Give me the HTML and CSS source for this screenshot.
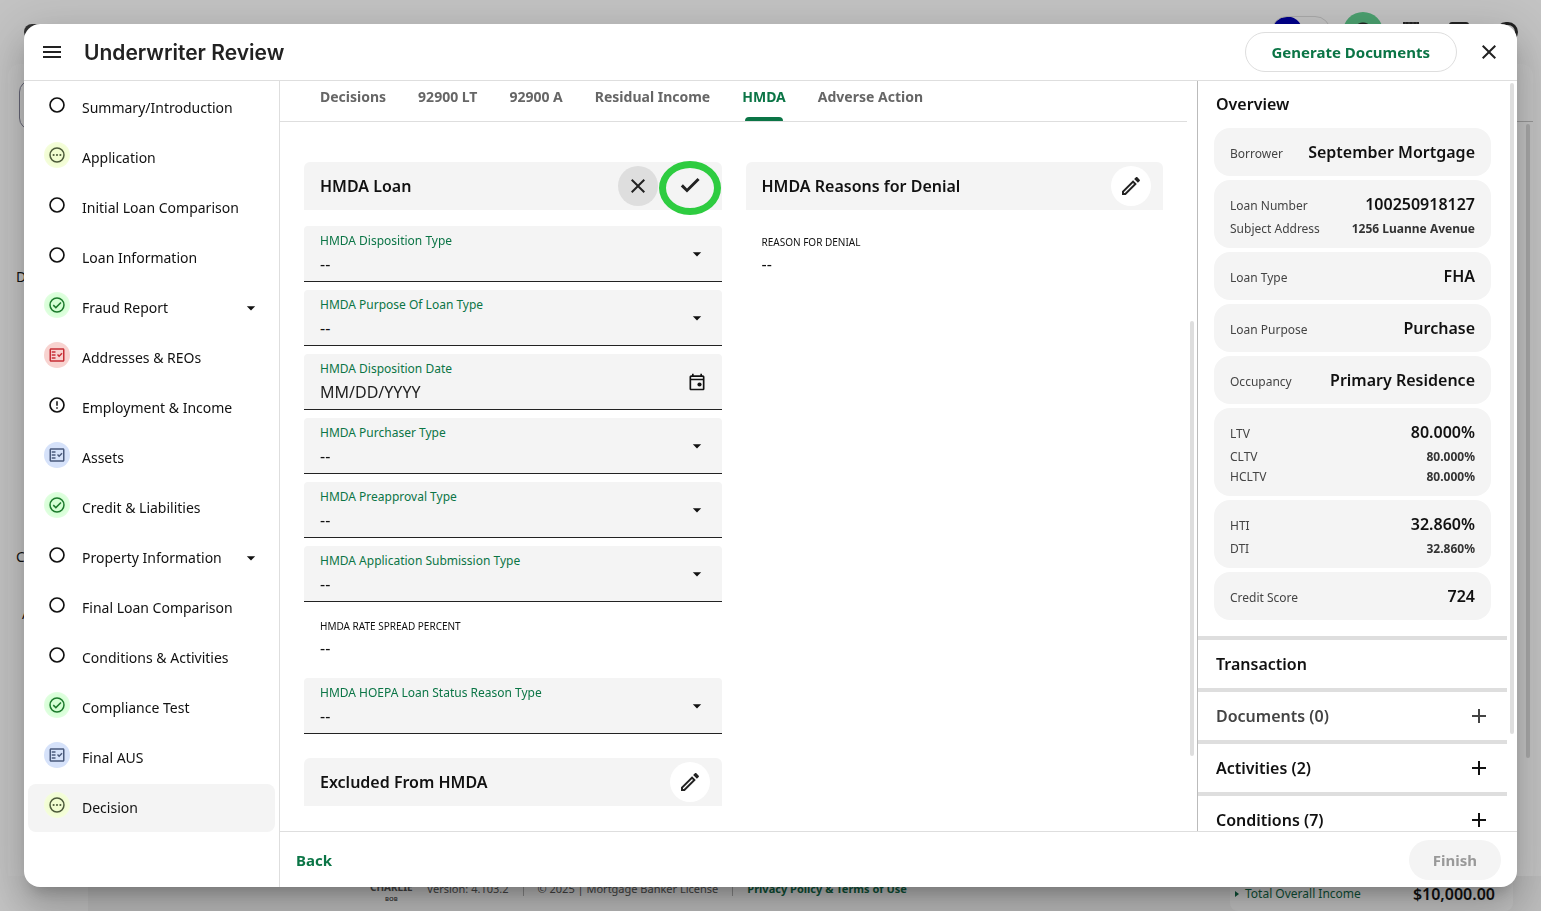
FILE: index.html
```html
<!DOCTYPE html>
<html lang="en">
<head>
    <meta charset="UTF-8">
    <title>Underwriter Review</title>
    <link rel="stylesheet" href="styles.css">
</head>
<body>
<svg class="sprite" aria-hidden="true">
    <symbol id="i-menu" viewBox="0 0 24 24"><path d="M3 18h18v-2H3v2zm0-5h18v-2H3v2zm0-7v2h18V6H3z"/></symbol>
    <symbol id="i-close" viewBox="0 0 24 24"><path d="M19 6.41L17.59 5 12 10.59 6.41 5 5 6.41 10.59 12 5 17.59 6.41 19 12 13.41 17.59 19 19 17.59 13.41 12z"/></symbol>
    <symbol id="i-check" viewBox="0 0 24 24"><path d="M9 14.4L4.9 10.3 2.8 12.4 9 18.6 21.6 6 19.5 3.9z"/></symbol>
    <symbol id="i-edit" viewBox="0 0 24 24"><path d="M14.06 9.02l.92.92L5.92 19H5v-.92l9.06-9.06M17.66 3c-.25 0-.51.1-.7.29l-1.83 1.83 3.75 3.75 1.83-1.83c.39-.39.39-1.02 0-1.41l-2.34-2.34c-.2-.2-.45-.29-.71-.29zm-3.6 3.19L3 17.25V21h3.75L17.81 9.94l-3.75-3.75z"/></symbol>
    <symbol id="i-arrow" viewBox="0 0 24 24"><path d="M7 10l5 5 5-5z"/></symbol>
    <symbol id="i-plus" viewBox="0 0 24 24"><path d="M19 13h-6v6h-2v-6H5v-2h6V5h2v6h6z"/></symbol>
    <symbol id="i-event" viewBox="0 0 24 24"><path d="M19 4h-1V2h-2v2H8V2H6v2H5c-1.100 0-2 .9-2 2v14c0 1.100.9 2 2 2h14c1.100 0 2-.9 2-2V6c0-1.100-.9-2-2-2zm0 16H5V10h14v10zm0-12H5V6h14v2z"/><circle cx="15" cy="15" r="2.500"/></symbol>
    <symbol id="i-empty" viewBox="0 0 24 24"><circle cx="12" cy="12" r="9.300" fill="none" stroke="currentColor" stroke-width="2.200"/></symbol>
    <symbol id="i-pending" viewBox="0 0 24 24"><circle cx="12" cy="12" r="9.300" fill="none" stroke="currentColor" stroke-width="2"/><circle cx="7.500" cy="12" r="1.400"/><circle cx="12" cy="12" r="1.400"/><circle cx="16.500" cy="12" r="1.400"/></symbol>
    <symbol id="i-done" viewBox="0 0 24 24"><g fill="none" stroke="currentColor" stroke-width="2"><circle cx="12" cy="12" r="9.300"/><path d="M7 12.200l3.500 3.300 6.800-6.800"/></g></symbol>
    <symbol id="i-error" viewBox="0 0 24 24"><circle cx="12" cy="12" r="9.300" fill="none" stroke="currentColor" stroke-width="2.200"/><path d="M11 7h2v6h-2zM11 15h2v2h-2z"/></symbol>
    <symbol id="i-fact" viewBox="0 0 24 24"><path d="M20 3H4c-1.100 0-2 .9-2 2v14c0 1.100.9 2 2 2h16c1.100 0 2-.9 2-2V5c0-1.100-.9-2-2-2zm0 16H4V5h16v14zM19.410 10.420L17.990 9l-3.170 3.170-1.410-1.420L12 12.160 14.820 15zM5 7h5v2H5zM5 11h5v2H5zM5 15h5v2H5z"/></symbol>
</svg>

<!-- page under the dialog -->
<div class="app">
    <div class="app-header">
        <span class="app-logo"></span>
        <span class="app-toggle"></span>
        <span class="app-tool"><i class="tool-avatar"></i></span>
        <span class="app-tool"><i class="tool-list"></i></span>
        <span class="app-tool"><i class="tool-card"></i></span>
        <span class="app-tool"><i class="tool-ring"></i></span>
    </div>
    <div class="app-main">
        <div class="app-rail">
            <span class="rail-box"></span>
            <span class="rail-d">D</span>
            <span class="rail-c">C</span>
            <span class="rail-a">A</span>
        </div>
        <div class="app-side"><i class="scroll-app"></i></div>
    </div>
    <div class="app-footer">
        <div class="app-legal">
            <span class="brand">CHARLIE<small>BOB</small></span>
            <span>Version: 4.103.2</span>
            <span>© 2025 | Mortgage Banker License</span>
            <a href="#">Privacy Policy &amp; Terms of Use</a>
        </div>
        <div class="app-total"><a href="#"><i class="caret"></i>Total Overall Income</a><strong>$10,000.00</strong></div>
    </div>
</div>

<div class="dialog" role="dialog" aria-labelledby="dialogTitle">
    <header class="dialog-header">
        <button type="button" class="plain" aria-label="Menu"><svg class="icon"><use href="#i-menu"/></svg></button>
        <h1 id="dialogTitle">Underwriter Review</h1>
        <button type="button" class="btn-outline">Generate Documents</button>
        <button type="button" class="plain" aria-label="Close"><svg class="icon"><use href="#i-close"/></svg></button>
    </header>

    <div class="dialog-body">
        <nav class="steps">
            <a href="#"><span class="status"><svg><use href="#i-empty"/></svg></span>Summary/Introduction</a>
            <a href="#"><span class="status pending"><svg><use href="#i-pending"/></svg></span>Application</a>
            <a href="#"><span class="status"><svg><use href="#i-empty"/></svg></span>Initial Loan Comparison</a>
            <a href="#"><span class="status"><svg><use href="#i-empty"/></svg></span>Loan Information</a>
            <a href="#"><span class="status done"><svg><use href="#i-done"/></svg></span>Fraud Report<svg class="expand"><use href="#i-arrow"/></svg></a>
            <a href="#"><span class="status failed"><svg><use href="#i-fact"/></svg></span>Addresses &amp; REOs</a>
            <a href="#"><span class="status"><svg><use href="#i-error"/></svg></span>Employment &amp; Income</a>
            <a href="#"><span class="status review"><svg><use href="#i-fact"/></svg></span>Assets</a>
            <a href="#"><span class="status done"><svg><use href="#i-done"/></svg></span>Credit &amp; Liabilities</a>
            <a href="#"><span class="status"><svg><use href="#i-empty"/></svg></span>Property Information<svg class="expand"><use href="#i-arrow"/></svg></a>
            <a href="#"><span class="status"><svg><use href="#i-empty"/></svg></span>Final Loan Comparison</a>
            <a href="#"><span class="status"><svg><use href="#i-empty"/></svg></span>Conditions &amp; Activities</a>
            <a href="#"><span class="status done"><svg><use href="#i-done"/></svg></span>Compliance Test</a>
            <a href="#"><span class="status review"><svg><use href="#i-fact"/></svg></span>Final AUS</a>
            <a href="#" class="active"><span class="status pending"><svg><use href="#i-pending"/></svg></span>Decision</a>
        </nav>

        <div class="workspace">
            <div class="panes">
                <main class="content">
                    <nav class="tabs">
                        <a href="#">Decisions</a>
                        <a href="#">92900 LT</a>
                        <a href="#">92900 A</a>
                        <a href="#">Residual Income</a>
                        <a href="#" class="active">HMDA</a>
                        <a href="#">Adverse Action</a>
                    </nav>
                    <div class="columns">
                        <div class="column">
                            <section>
                                <div class="card-head">
                                    <h2>HMDA Loan</h2>
                                    <button type="button" class="round cancel" aria-label="Cancel"><svg class="icon"><use href="#i-close"/></svg></button>
                                    <button type="button" class="round save" aria-label="Save"><svg class="icon"><use href="#i-check"/></svg></button>
                                </div>
                                <form class="fields">
                                    <div class="field">
                                        <label for="dispositionType">HMDA Disposition Type</label>
                                        <select id="dispositionType"><option>--</option></select>
                                        <svg><use href="#i-arrow"/></svg>
                                    </div>
                                    <div class="field">
                                        <label for="purposeType">HMDA Purpose Of Loan Type</label>
                                        <select id="purposeType"><option>--</option></select>
                                        <svg><use href="#i-arrow"/></svg>
                                    </div>
                                    <div class="field">
                                        <label for="dispositionDate">HMDA Disposition Date</label>
                                        <input type="text" id="dispositionDate" placeholder="MM/DD/YYYY">
                                        <svg><use href="#i-event"/></svg>
                                    </div>
                                    <div class="field">
                                        <label for="purchaserType">HMDA Purchaser Type</label>
                                        <select id="purchaserType"><option>--</option></select>
                                        <svg><use href="#i-arrow"/></svg>
                                    </div>
                                    <div class="field">
                                        <label for="preapprovalType">HMDA Preapproval Type</label>
                                        <select id="preapprovalType"><option>--</option></select>
                                        <svg><use href="#i-arrow"/></svg>
                                    </div>
                                    <div class="field">
                                        <label for="submissionType">HMDA Application Submission Type</label>
                                        <select id="submissionType"><option>--</option></select>
                                        <svg><use href="#i-arrow"/></svg>
                                    </div>
                                    <div class="readonly">
                                        <span class="caption">HMDA RATE SPREAD PERCENT</span>
                                        <span class="text">--</span>
                                    </div>
                                    <div class="field">
                                        <label for="hoepaType">HMDA HOEPA Loan Status Reason Type</label>
                                        <select id="hoepaType"><option>--</option></select>
                                        <svg><use href="#i-arrow"/></svg>
                                    </div>
                                </form>
                            </section>
                            <section>
                                <div class="card-head">
                                    <h2>Excluded From HMDA</h2>
                                    <button type="button" class="round edit" aria-label="Edit excluded from HMDA"><svg class="icon"><use href="#i-edit"/></svg></button>
                                </div>
                            </section>
                        </div>
                        <div class="column">
                            <section>
                                <div class="card-head">
                                    <h2>HMDA Reasons for Denial</h2>
                                    <button type="button" class="round edit" aria-label="Edit reasons for denial"><svg class="icon"><use href="#i-edit"/></svg></button>
                                </div>
                                <div class="fields">
                                    <div class="readonly">
                                        <span class="caption">REASON FOR DENIAL</span>
                                        <span class="text">--</span>
                                    </div>
                                </div>
                            </section>
                        </div>
                    </div>
                    <i class="scroll-content"></i>
                </main>

                <aside class="overview">
                    <h2>Overview</h2>
                    <div class="facts">
                        <dl>
                            <div><dt>Borrower</dt><dd>September Mortgage</dd></div>
                        </dl>
                        <dl>
                            <div><dt>Loan Number</dt><dd>100250918127</dd></div>
                            <div class="minor"><dt>Subject Address</dt><dd>1256 Luanne Avenue</dd></div>
                        </dl>
                        <dl>
                            <div><dt>Loan Type</dt><dd>FHA</dd></div>
                        </dl>
                        <dl>
                            <div><dt>Loan Purpose</dt><dd>Purchase</dd></div>
                        </dl>
                        <dl>
                            <div><dt>Occupancy</dt><dd>Primary Residence</dd></div>
                        </dl>
                        <dl>
                            <div><dt>LTV</dt><dd>80.000%</dd></div>
                            <div class="minor"><dt>CLTV</dt><dd>80.000%</dd></div>
                            <div class="minor"><dt>HCLTV</dt><dd>80.000%</dd></div>
                        </dl>
                        <dl>
                            <div><dt>HTI</dt><dd>32.860%</dd></div>
                            <div class="minor"><dt>DTI</dt><dd>32.860%</dd></div>
                        </dl>
                        <dl>
                            <div><dt>Credit Score</dt><dd>724</dd></div>
                        </dl>
                    </div>
                    <div class="panel-row">Transaction</div>
                    <button type="button" class="panel-row muted">Documents (0)<svg class="icon"><use href="#i-plus"/></svg></button>
                    <button type="button" class="panel-row">Activities (2)<svg class="icon"><use href="#i-plus"/></svg></button>
                    <button type="button" class="panel-row">Conditions (7)<svg class="icon"><use href="#i-plus"/></svg></button>
                    <i class="scroll-overview"></i>
                </aside>
            </div>

            <footer class="dialog-footer">
                <button type="button" class="btn-text">Back</button>
                <button type="button" class="btn-finish" disabled>Finish</button>
            </footer>
        </div>
    </div>
</div>
</body>
</html>
```
FILE: styles.css
```css
* {
    box-sizing: border-box;
}

body, html {
    height: 100%;
    margin: 0;
    overflow: hidden;
    background-color: #c3c3c3;
    font-family: 'Noto Sans', 'Open Sans', sans-serif;
    font-size: 14px;
    color: #111;
}

a {
    color: inherit;
    text-decoration: none;
}

button, input, select {
    font-family: inherit;
    color: inherit;
}

button {
    padding: 0;
    border: none;
    background: none;
    cursor: pointer;
}

h1, h2, dl, dd {
    margin: 0;
}

svg {
    display: block;
    fill: currentColor;
}

.sprite {
    position: absolute;
    width: 0;
    height: 0;
}

.icon {
    width: 24px;
    height: 24px;
}

/* page under the dialog */
.app {
    display: flex;
    flex-direction: column;
    height: 100%;
}

.app-header {
    display: flex;
    align-items: center;
    height: 64px;
    padding: 0 10px 0 24px;
}

.app-logo {
    width: 24px;
    height: 16px;
    margin-right: auto;
    border-radius: 8px;
    background: #333;
}

.app-toggle {
    width: 60px;
    height: 32px;
    margin-right: 8px;
    border: 1px solid #aaa;
    border-radius: 16px;
    background: radial-gradient(circle at 15px 15px, #00008b 15px, transparent 16px);
}

.app-tool {
    display: flex;
    justify-content: center;
    width: 48px;
}

.tool-avatar {
    width: 40px;
    height: 40px;
    border-radius: 50%;
    background: radial-gradient(circle, #222 9px, #4ba06f 10px);
}

.tool-list {
    width: 16px;
    height: 20px;
    border-top: 2px dotted #222;
    background: #333;
}

.tool-card {
    width: 20px;
    height: 20px;
    border: 3px solid #222;
    border-radius: 3px;
}

.tool-ring {
    width: 22px;
    height: 20px;
    border: 3px solid #222;
    border-radius: 12px;
}

.app-main {
    display: flex;
    flex: 1;
    justify-content: space-between;
    margin: 0 8px;
    border-radius: 12px 12px 0 0;
    background: #c6c6c6;
}

.app-rail {
    display: flex;
    flex-direction: column;
    padding: 16px 0 0 8px;
    line-height: 20px;
}

.rail-box {
    width: 40px;
    height: 50px;
    margin-left: 3px;
    border: 1px solid #667;
    border-radius: 12px;
}

.rail-d {
    margin-top: 137px;
}

.rail-c {
    margin-top: 260px;
}

.rail-a {
    margin-top: 37px;
    padding-left: 6px;
}

.app-side {
    width: 40px;
    margin-top: 57px;
    padding: 2px 3px 0 33px;
    border-top: 1px solid #999;
}

.scroll-app {
    display: block;
    height: 634px;
    border-radius: 2px;
    background: #aaa;
}

.app-footer {
    display: flex;
    align-items: flex-end;
    height: 35px;
    padding: 0 28px 0 88px;
    background: linear-gradient(to right, #c3c3c3 88px, #bcbcbc 88px);
}

.app-legal {
    display: flex;
    align-items: center;
    flex: 1;
    gap: 14px;
    height: 35px;
    padding: 0 0 11px 282px;
    font-size: 11px;
    color: #444;
}

.app-legal > * + * + * {
    padding-left: 14px;
    border-left: 1px solid #888;
}

.app-legal a {
    font-weight: 700;
    color: #0d5237;
}

.brand {
    display: flex;
    flex-direction: column;
    align-items: center;
    padding-top: 8px;
    font-size: 10px;
    font-weight: 700;
    line-height: 14px;
}

.brand small {
    font-size: 6px;
    line-height: 10px;
}

.app-total {
    display: flex;
    align-items: center;
    justify-content: space-between;
    width: 283px;
    height: 35px;
    padding: 0 18px 0 5px;
    border-radius: 0 0 8px 8px;
    background: #c3c3c3;
}

.app-total a {
    display: flex;
    align-items: center;
    gap: 6px;
    font-size: 12px;
    color: #0d5237;
}

.app-total strong {
    font-size: 16px;
    font-weight: 600;
}

.caret {
    border: 3px solid transparent;
    border-left: 4px solid #0d5237;
    border-right: none;
}

/* dialog */
.dialog {
    position: fixed;
    inset: 24px;
    display: flex;
    flex-direction: column;
    overflow: hidden;
    border-radius: 16px;
    background: #fff;
    box-shadow: 0 11px 15px -7px rgba(0, 0, 0, 0.2), 0 24px 38px 3px rgba(0, 0, 0, 0.14), 0 9px 46px 8px rgba(0, 0, 0, 0.12);
}

.dialog-header {
    display: flex;
    align-items: center;
    flex: none;
    height: 57px;
    padding: 0 16px;
    border-bottom: 1px solid #dedede;
}

.dialog-header h1 {
    margin: 0 auto 0 20px;
    font-family: Inter, 'Noto Sans', sans-serif;
    font-size: 21px;
    font-weight: 600;
    color: #222;
}

.plain {
    color: #222;
}

.btn-outline {
    height: 40px;
    margin-right: 20px;
    padding: 0 26px;
    border: 1px solid #dedede;
    border-radius: 20px;
    font-size: 15px;
    font-weight: 700;
    color: #0b7546;
}

.dialog-body {
    display: flex;
    flex: 1;
    min-height: 0;
}

/* steps on the left */
.steps {
    display: flex;
    flex-direction: column;
    flex: none;
    gap: 2px;
    width: 256px;
    padding: 3px 4px;
    border-right: 1px solid #dedede;
}

.steps a {
    display: flex;
    gap: 12px;
    height: 48px;
    padding: 0 14px 0 16px;
    border-radius: 8px;
    line-height: 48px;
}

.steps .active {
    background: #f4f4f4;
}

.status {
    display: flex;
    align-items: center;
    justify-content: center;
    width: 26px;
    height: 26px;
    margin-top: 8px;
    border-radius: 50%;
}

.status svg {
    width: 18px;
    height: 18px;
}

.pending {
    background: radial-gradient(circle, #f0fccf 40%, #f9ffe8);
    color: #4c5a3a;
}

.done {
    background: radial-gradient(circle, #d4ffd4 40%, #ecffec);
    color: #1c7a2c;
}

.failed {
    background: #f8d3d0;
    color: #c62f36;
}

.review {
    background: #d6e2fa;
    color: #4a5a7c;
}

.expand {
    width: 20px;
    height: 20px;
    margin: 14px 0 0 auto;
}

/* middle part */
.workspace {
    display: flex;
    flex-direction: column;
    flex: 1;
    min-width: 0;
}

.panes {
    display: flex;
    flex: 1;
    min-height: 0;
}

.content {
    position: relative;
    flex: 1;
    min-width: 0;
    padding-right: 10px;
    overflow: hidden;
}

.tabs {
    display: flex;
    gap: 32px;
    height: 41px;
    padding: 0 40px;
    border-bottom: 1px solid #dedede;
    font-weight: 700;
    line-height: 32px;
    color: #666;
}

.tabs .active {
    display: flex;
    flex-direction: column;
    justify-content: space-between;
    color: #0b7546;
}

.tabs .active::after {
    content: "";
    height: 4px;
    margin: 0 3px;
    border-radius: 4px 4px 0 0;
    background: #0b7546;
}

.columns {
    display: grid;
    grid-template-columns: 1fr 1fr;
    gap: 24px;
    padding: 40px 24px 24px;
}

.column {
    display: flex;
    flex-direction: column;
    gap: 24px;
}

.card-head {
    display: flex;
    align-items: center;
    gap: 12px;
    height: 48px;
    padding: 0 12px 0 16px;
    border-radius: 6px 6px 0 0;
    background: #f4f4f4;
}

.card-head h2 {
    flex: 1;
    font-size: 16px;
    font-weight: 600;
}

.round {
    position: relative;
    display: flex;
    align-items: center;
    justify-content: center;
    width: 40px;
    height: 40px;
    border-radius: 50%;
    color: #222;
}

.cancel {
    background: #dedede;
}

.edit {
    background: #fff;
}

/* highlight drawn around the save button */
.save::after {
    content: "";
    position: absolute;
    inset: -5px -11px -9px;
    border: 7px solid #2ecc40;
    border-radius: 50%;
}

.fields {
    display: flex;
    flex-direction: column;
    gap: 8px;
    padding-top: 16px;
}

.field {
    display: grid;
    grid-template: 22px 24px / 1fr 20px;
    height: 56px;
    padding: 5px 15px 0 16px;
    border-bottom: 1px solid #222;
    border-radius: 4px 4px 0 0;
    background: #f4f4f4;
}

.field label {
    grid-area: 1 / 1;
    font-size: 12px;
    line-height: 20px;
    color: #0b7546;
}

.field select,
.field input {
    grid-area: 2 / 1 / 3 / 3;
    width: 100%;
    height: 22px;
    padding: 0;
    border: none;
    outline: none;
    background: none;
    font-size: 16px;
    appearance: none;
}

.field input::placeholder {
    color: #222;
}

.field svg {
    grid-area: 1 / 2 / 3 / 3;
    align-self: center;
    width: 20px;
    height: 20px;
    pointer-events: none;
}

.readonly {
    display: flex;
    flex-direction: column;
    gap: 2px;
    padding: 8px 16px 10px;
}

.caption {
    font-size: 10px;
    line-height: 16px;
}

.text {
    font-size: 16px;
    line-height: 24px;
}

/* overview on the right */
.overview {
    position: relative;
    flex: none;
    width: 320px;
    padding-right: 10px;
    overflow: hidden;
    border-left: 1px solid #bbb;
}

.overview h2 {
    padding-left: 18px;
    font-size: 16px;
    font-weight: 600;
    line-height: 47px;
}

.facts {
    display: flex;
    flex-direction: column;
    gap: 4px;
    padding: 0 16px 16px;
}

.facts dl {
    padding: 12px 16px;
    border-radius: 16px;
    background: #f4f4f4;
}

.facts dl div {
    display: flex;
    align-items: baseline;
    justify-content: space-between;
    height: 24px;
    line-height: 24px;
}

.facts dt {
    font-size: 12px;
    color: #444;
}

.facts dd {
    font-size: 16px;
    font-weight: 600;
}

.facts dl .minor {
    height: 20px;
    line-height: 26px;
}

.facts .minor dd {
    font-size: 12px;
    font-weight: 700;
    color: #333;
}

.panel-row {
    display: flex;
    align-items: center;
    justify-content: space-between;
    width: 100%;
    height: 52px;
    padding: 0 16px 0 18px;
    border-top: 4px solid #dedede;
    font-size: 16px;
    font-weight: 600;
}

.muted {
    color: #444;
}

.scroll-content,
.scroll-overview {
    position: absolute;
    right: 3px;
    width: 4px;
    border-radius: 2px;
    background: #dedede;
}

.scroll-content {
    top: 32%;
    bottom: 10%;
}

.scroll-overview {
    top: 2px;
    bottom: 13%;
}

.dialog-footer {
    display: flex;
    align-items: center;
    justify-content: space-between;
    flex: none;
    height: 56px;
    padding: 0 16px;
    border-top: 1px solid #dedede;
}

.btn-text,
.btn-finish {
    height: 40px;
    font-size: 15px;
    font-weight: 700;
    color: #0b7546;
}

.btn-finish {
    padding: 0 24px;
    border-radius: 20px;
    background: #f4f4f4;
    color: #999;
}
```
